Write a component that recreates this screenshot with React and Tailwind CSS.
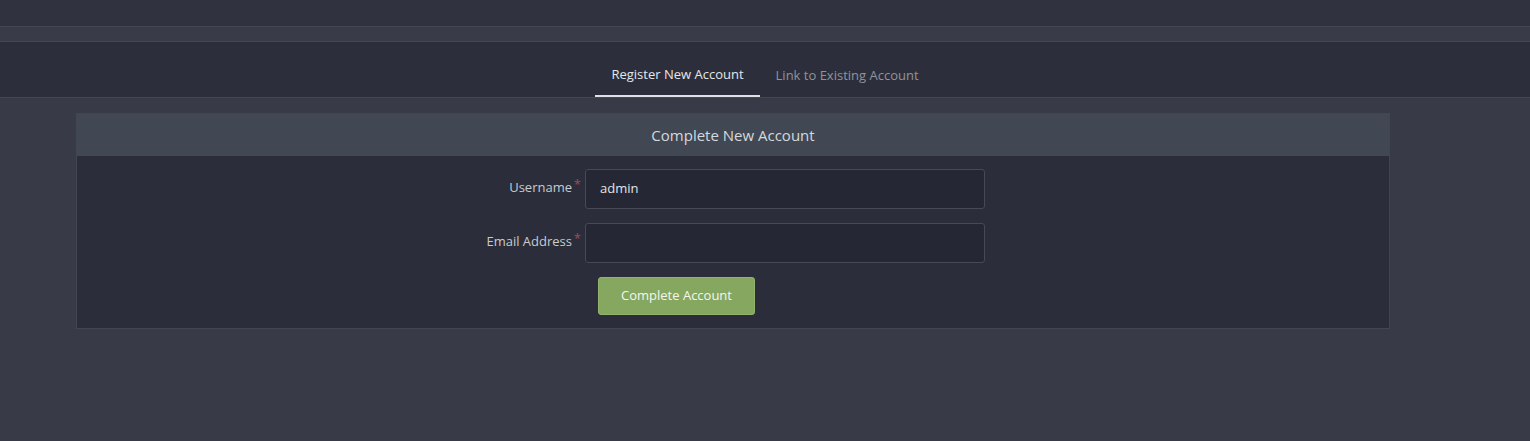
export default function App() {
  const f = { fontFamily: '"Open Sans", sans-serif' };
  return (
    <div style={f} className="w-[1530px] h-[441px] bg-[#383b47] text-[13px] overflow-hidden">
      <div className="h-[27px] bg-[#30333f] border-b border-[#434653]" />
      <div className="h-[15px] bg-[#393c48] border-b border-[#444753]" />
      <div className="h-[56px] bg-[#2c2f3b] border-b border-[#444753] flex justify-center items-end">
        <div className="flex">
          <div className="px-4 h-[42px] flex items-center text-[#e4e6ea] border-b-2 border-[#dfe1e5]">Register New Account</div>
          <div className="px-4 h-[42px] flex items-center text-[#8f939c]">Link to Existing Account</div>
        </div>
      </div>
      <div className="ml-[76px] mt-[15px] w-[1314px] border border-[#424552] bg-[#2b2e3a]">
        <div className="h-[42px] bg-[#414853] flex items-center justify-center text-[15px] text-[#d5d8dd]">Complete New Account</div>
        <div className="py-[13px] flex flex-col gap-[14px]">
          {[["Username", "admin"], ["Email Address", ""]].map(([l, v]) => (
            <div key={l} className="flex items-center">
              <div className="w-[508px] text-right text-[#c8cbd0] pr-[13px] relative -top-[1px]">
                {l}<span className="text-[#a04a55] absolute right-[4px] -top-[3px]">*</span>
              </div>
              <div className="w-[400px] h-[40px] rounded-[3px] border border-[#474a56] bg-[#252834] px-[14px] flex items-center text-[#e1e3e6]">{v}</div>
            </div>
          ))}
          <div className="pl-[521px]">
            <button style={f} className="w-[157px] h-[38px] rounded-[3px] bg-[#86a75f] text-[#f3f6ef] text-[13px] border border-[#94b46d]">Complete Account</button>
          </div>
        </div>
      </div>
    </div>
  );
}
